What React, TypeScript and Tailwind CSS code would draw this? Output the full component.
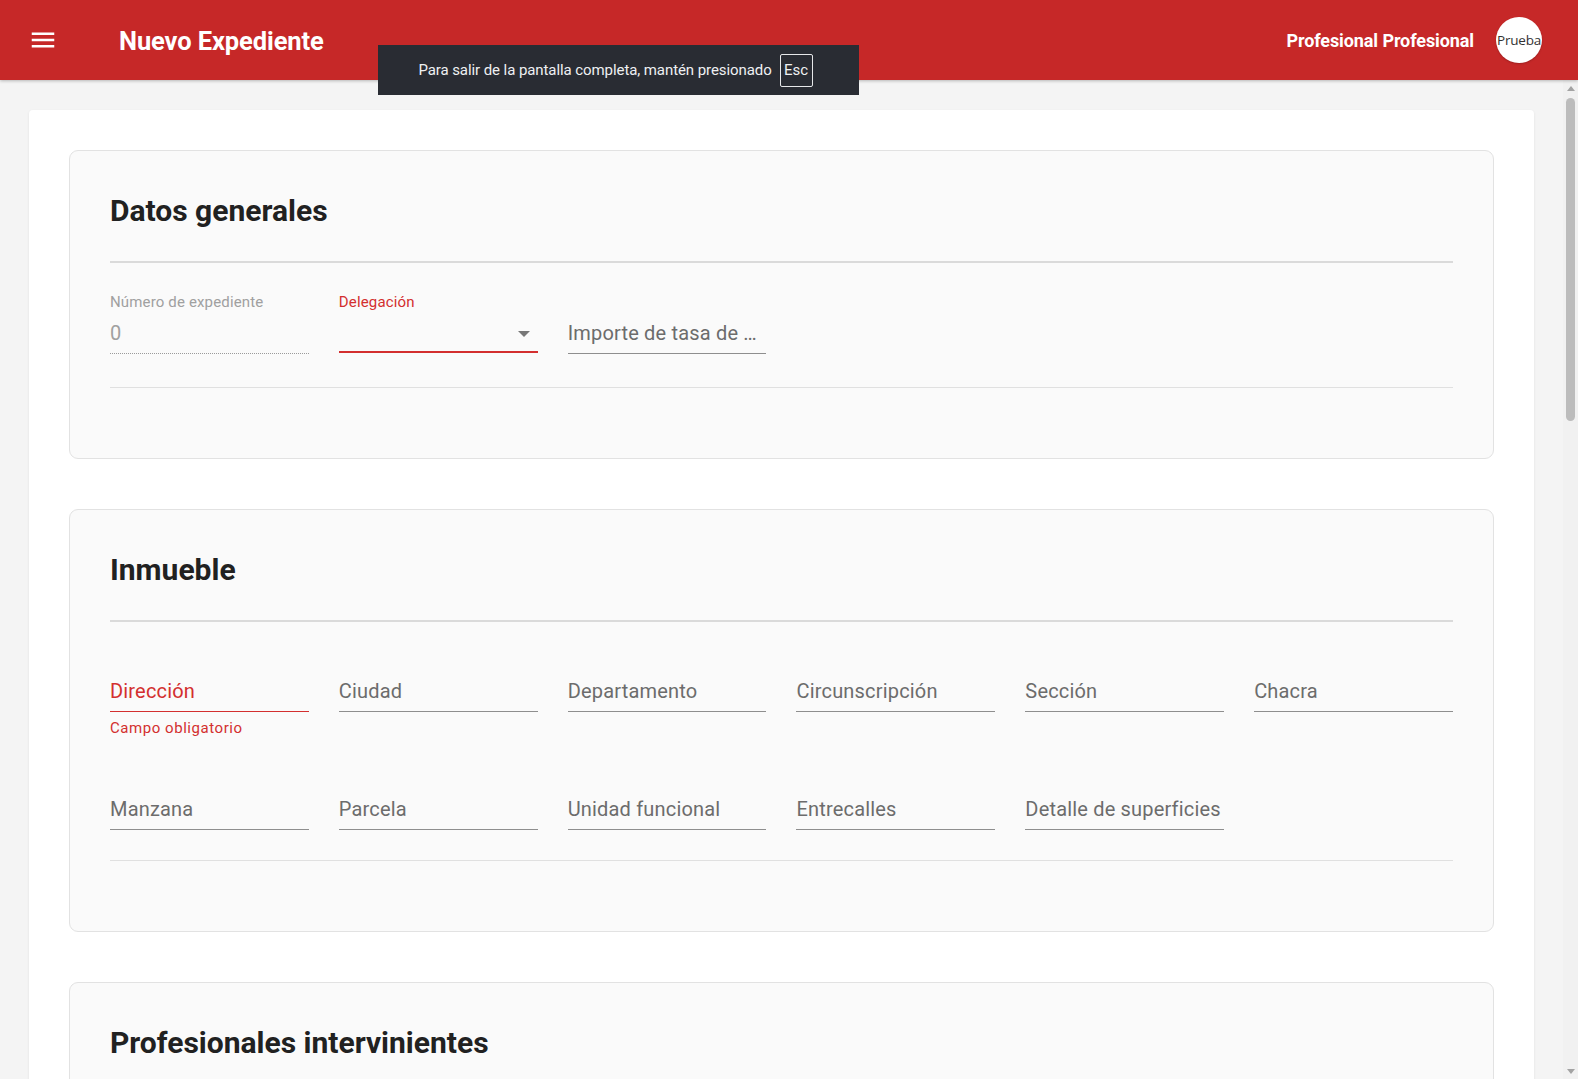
import React from "react";

function MenuIcon() {
  return (
    <svg width="30" height="30" viewBox="0 0 24 24" fill="#ffffff" aria-hidden="true">
      <path d="M3 18h18v-2H3v2zm0-5h18v-2H3v2zm0-7v2h18V6H3z" />
    </svg>
  );
}

function PlainField({ label }: { label: string }) {
  return (
    <div className="flex flex-col">
      <div className="h-[20px]" />
      <div className="h-[42px] flex items-center border-b border-[#8e8e8e] text-[20px] text-[#6c6c6c] tracking-[0.18px] whitespace-nowrap overflow-hidden">
        {label}
      </div>
    </div>
  );
}

function Section({ title, children }: { title: string; children?: React.ReactNode }) {
  return (
    <section className="border border-[#e2e2e2] rounded-[9px] bg-[#fafafa] px-[40px] pt-[40px] pb-[70px]">
      <h2 className="h-[40px] leading-[40px] text-[30px] font-bold text-[#212121]">{title}</h2>
      <div className="mt-[30px] h-[2px] bg-[#dadada]" />
      {children}
    </section>
  );
}

export default function App() {
  return (
    <div className="relative h-screen w-full flex flex-col overflow-hidden bg-[#f4f4f4] font-['Roboto',sans-serif]">
      {/* Header */}
      <header className="relative z-10 h-[80px] shrink-0 bg-[#c62828] flex items-center shadow-[0_1px_3px_rgba(0,0,0,0.25)]">
        <div className="ml-[28px] flex items-center">
          <MenuIcon />
        </div>
        <h1 className="ml-[61px] pt-[3px] text-[25.5px] font-bold text-white tracking-[-0.1px]">Nuevo Expediente</h1>
        <div className="ml-auto mr-[36px] flex items-center gap-[22px]">
          <span className="text-[18px] font-bold text-white tracking-[-0.1px]">Profesional Profesional</span>
          <div className="w-[46px] h-[46px] rounded-full bg-white flex items-center justify-center overflow-hidden shadow-[0_1px_2px_rgba(0,0,0,0.2)]">
            <span className="text-[13.5px] text-[#333333] font-['Open_Sans',sans-serif] tracking-[-0.2px]">Prueba</span>
          </div>
        </div>
      </header>

      {/* Fullscreen toast overlay */}
      <div className="absolute z-20 left-[378px] top-[45px] w-[481px] h-[50px] bg-[#292c33] flex items-center justify-center gap-[8px] pr-[6px]">
        <span className="text-[15px] text-[#eef0f2] tracking-[-0.08px]">
          Para salir de la pantalla completa, mantén presionado
        </span>
        <span className="w-[33px] h-[33px] border border-[#e6e8ea] rounded-[2px] flex items-center justify-center text-[15px] text-[#eef0f2]">
          Esc
        </span>
      </div>

      <div className="flex flex-1 min-h-0">
        {/* Main scroll area */}
        <main className="flex-1 min-w-0 overflow-hidden pt-[30px] px-[29px]">
          <div className="bg-white rounded-[4px] shadow-[0_1px_3px_rgba(0,0,0,0.08)] px-[40px] pt-[40px] pb-[40px]">
            <Section title="Datos generales">
              <div className="mt-[29px] grid grid-cols-6 gap-x-[30px] gap-y-[31px] items-start">
                {/* Número de expediente (disabled) */}
                <div className="flex flex-col">
                  <div className="h-[20px] leading-[20px] text-[15px] text-[#a0a0a0] tracking-[0.15px] whitespace-nowrap">Número de expediente</div>
                  <div className="h-[42px] flex items-center border-b border-dotted border-[#9a9a9a] text-[20px] text-[#a0a0a0]">0</div>
                </div>
                {/* Delegación (select) */}
                <div className="flex flex-col">
                  <div className="h-[20px] leading-[20px] text-[15px] text-[#d32f2f] tracking-[0.15px] whitespace-nowrap">Delegación</div>
                  <div className="h-[41px] flex items-center justify-end pr-[8px] pt-[5px] border-b-2 border-[#d32f2f]">
                    <span className="w-0 h-0 border-l-[6px] border-r-[6px] border-t-[6px] border-l-transparent border-r-transparent border-t-[#777777]" />
                  </div>
                </div>
                <PlainField label="Importe de tasa de …" />
              </div>
              <div className="mt-[33px] h-px bg-[#e0e0e0]" />
            </Section>

            <div className="mt-[50px]">
              <Section title="Inmueble">
                <div className="mt-[28px] grid grid-cols-6 gap-x-[30px] gap-y-[30px] items-start">
                  <div className="flex flex-col">
                    <div className="h-[20px]" />
                    <div className="h-[42px] flex items-center border-b border-[#d32f2f] text-[20px] text-[#d32f2f] tracking-[0.18px]">Dirección</div>
                    <div className="mt-[6px] h-[20px] leading-[20px] text-[15px] text-[#d32f2f] tracking-[0.55px]">Campo obligatorio</div>
                  </div>
                  <PlainField label="Ciudad" />
                  <PlainField label="Departamento" />
                  <PlainField label="Circunscripción" />
                  <PlainField label="Sección" />
                  <PlainField label="Chacra" />
                  <PlainField label="Manzana" />
                  <PlainField label="Parcela" />
                  <PlainField label="Unidad funcional" />
                  <PlainField label="Entrecalles" />
                  <PlainField label="Detalle de superficies" />
                </div>
                <div className="mt-[30px] h-px bg-[#e0e0e0]" />
              </Section>
            </div>

            <div className="mt-[50px]">
              <Section title="Profesionales intervinientes" />
            </div>
          </div>
        </main>

        {/* Scrollbar */}
        <div className="w-[15px] shrink-0 bg-[#f1f1f1] flex flex-col items-center">
          <span className="mt-[6px] w-0 h-0 border-l-[4px] border-r-[4px] border-b-[5px] border-l-transparent border-r-transparent border-b-[#a3a3a3]" />
          <div className="mt-[7px] w-[9px] h-[323px] rounded-full bg-[#bcbcbc]" />
          <div className="flex-1" />
          <span className="mb-[5px] w-0 h-0 border-l-[4px] border-r-[4px] border-t-[5px] border-l-transparent border-r-transparent border-t-[#a3a3a3]" />
        </div>
      </div>
    </div>
  );
}
